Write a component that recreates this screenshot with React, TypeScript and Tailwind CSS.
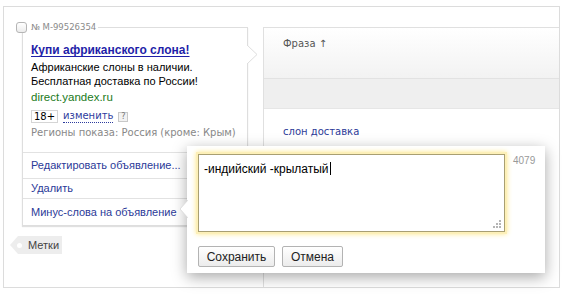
import React from 'react'

const arial = { fontFamily: '"Liberation Sans", Arial, sans-serif' }
const verdana = { fontFamily: '"DejaVu Sans", Verdana, sans-serif' }

function AdCard() {
  return (
    <div className="relative w-[226px] border border-[#dedede] bg-white shadow-[0_1px_1px_rgba(0,0,0,0.12)]">
      {/* legend: checkbox + number, sits over the top-left corner */}
      <div className="absolute -left-[7px] -top-[7px] flex items-center gap-[4px] bg-white pr-[2px]">
        <span className="block h-[11px] w-[11px] rounded-[3px] border border-[#b5b5b5] bg-gradient-to-b from-white to-[#ececec]" />
        <span className="text-[8.5px] leading-[12px] text-[#8a8a8a]" style={verdana}>№ M-99526354</span>
      </div>

      {/* arrow pointing to the table */}
      <svg className="absolute -right-[11px] top-[17px]" width="11" height="20" viewBox="0 0 11 20">
        <path d="M0 0 L10 9.5 L0 19" fill="#fff" stroke="#dedede" strokeWidth="1" />
      </svg>

      <div className="px-[8px] pt-[14px]" style={arial}>
        <div className="text-[12px] font-bold leading-[16px] text-[#1f1fa8] underline underline-offset-2">
          Купи африканского слона!
        </div>
        <div className="mt-[2px] text-[11px] leading-[14px] text-black">Африканские слоны в наличии.</div>
        <div className="text-[11px] leading-[14px] text-black">Бесплатная доставка по России!</div>
        <div className="mt-[2px] text-[11.5px] leading-[14px] text-[#1a7a1a]">direct.yandex.ru</div>
        <div className="mt-[6px] flex items-center">
          <span className="flex h-[13px] items-center border border-[#d5d5d5] px-[2px] text-[10px] leading-none text-black" style={verdana}>18+</span>
          <span className="ml-[5px] border-b border-dotted border-[#2d3c9e] text-[10px] leading-[12px] text-[#2d3c9e]" style={verdana}>изменить</span>
          <span className="ml-[5px] flex h-[10px] w-[10px] items-center justify-center border border-[#c8c8c8] bg-[#f2f2f2] text-[8px] leading-none text-[#777]" style={verdana}>?</span>
        </div>
        <div className="mt-[4px] whitespace-nowrap text-[10px] leading-[12px] text-[#888]" style={verdana}>
          Регионы показа: Россия (кроме: Крым)
        </div>
      </div>

      <div className="mt-[13px] text-[11px] text-[#2b3a98]" style={arial}>
        <div className="flex h-[26px] items-center border-t border-[#e2e2e2] px-[8px]">Редактировать объявление...</div>
        <div className="flex h-[20px] items-center border-t border-[#e2e2e2] px-[8px]">Удалить</div>
        <div className="flex h-[27px] items-start border-t border-[#e2e2e2] px-[8px] pt-[5px]">Минус-слова на объявление</div>
      </div>
    </div>
  )
}

function TagLabel() {
  return (
    <div className="relative -ml-[12px] mt-[10px] flex h-[18px] w-[52px] items-center bg-[#ededed] pl-[18px] text-[11px] text-[#444] [clip-path:polygon(8px_0,100%_0,100%_100%,8px_100%,0_50%)]" style={arial}>
      <span className="absolute left-[7px] top-[6.5px] h-[5px] w-[5px] rounded-full bg-white" />
      Метки
    </div>
  )
}

function PhraseTable() {
  return (
    <div className="mt-[20px] flex flex-1 flex-col border-l border-t border-[#e0e0e0]" style={verdana}>
      <div className="h-[50px] bg-gradient-to-b from-white to-[#f2f2f2] pl-[19px] pt-[9px] text-[10px] leading-[14px] text-[#555]">
        Фраза ↑
      </div>
      <div className="h-[30px] border-t border-[#e2e2e2] bg-[#efefef]" />
      <div className="flex-1 border-t border-[#e6e6e6] pl-[19px] pt-[16px] text-[10px] leading-[14px] text-[#2b3a98]">
        слон доставка
      </div>
    </div>
  )
}

function MinusWordsPopup() {
  return (
    <div className="absolute left-[183px] top-[139px] h-[127px] w-[358px] bg-white shadow-[0_4px_14px_rgba(0,0,0,0.35)]" style={arial}>
      <svg className="absolute -left-[7px] top-[54px]" width="8" height="18" viewBox="0 0 8 18">
        <path d="M8 0 L0 9 L8 18 Z" fill="#fff" />
        <path d="M8 0 L0 9 L8 18" fill="none" stroke="#d8d8d8" strokeWidth="0.8" />
      </svg>
      <div className="flex pl-[11px] pt-[8px]">
        <div className="relative h-[78px] w-[307px] border border-[#a99f72] bg-white px-[5px] pt-[1px] shadow-[0_0_0_2px_#fdf0b8,0_0_5px_2px_#ffe88a]">
          <span className="text-[12px] leading-[16px] text-black">-индийский -крылатый</span>
          <span className="ml-[1px] inline-block h-[13px] w-px translate-y-[2px] bg-black" />
          <svg className="absolute bottom-[2px] right-[2px]" width="10" height="10" viewBox="0 0 10 10">
            <g fill="#b5b5b5">
              <rect x="7" y="1" width="2" height="2" />
              <rect x="4" y="4" width="2" height="2" />
              <rect x="7" y="4" width="2" height="2" />
              <rect x="1" y="7" width="2" height="2" />
              <rect x="4" y="7" width="2" height="2" />
              <rect x="7" y="7" width="2" height="2" />
            </g>
          </svg>
        </div>
        <span className="ml-[8px] pt-[1px] text-[10px] leading-[12px] text-[#999]">4079</span>
      </div>
      <div className="mt-[14px] flex gap-[7px] pl-[11px]">
        <button className="h-[21px] w-[77px] rounded-[2px] border border-[#b3b3b3] bg-gradient-to-b from-white to-[#ececec] text-[12px] text-[#222]">Сохранить</button>
        <button className="h-[21px] w-[61px] rounded-[2px] border border-[#b3b3b3] bg-gradient-to-b from-white to-[#ececec] text-[12px] text-[#222]">Отмена</button>
      </div>
    </div>
  )
}

export default function App() {
  return (
    <div className="h-[298px] w-[564px] overflow-hidden bg-white pl-[3px] pt-[6px]">
      <div className="relative flex h-[282px] w-[557px] border border-[#dcdcdc]">
        <div className="ml-[18px] mt-[20px] flex flex-col">
          <AdCard />
          <TagLabel />
        </div>
        <div className="ml-[15px] flex flex-1">
          <PhraseTable />
        </div>
        <MinusWordsPopup />
      </div>
    </div>
  )
}
